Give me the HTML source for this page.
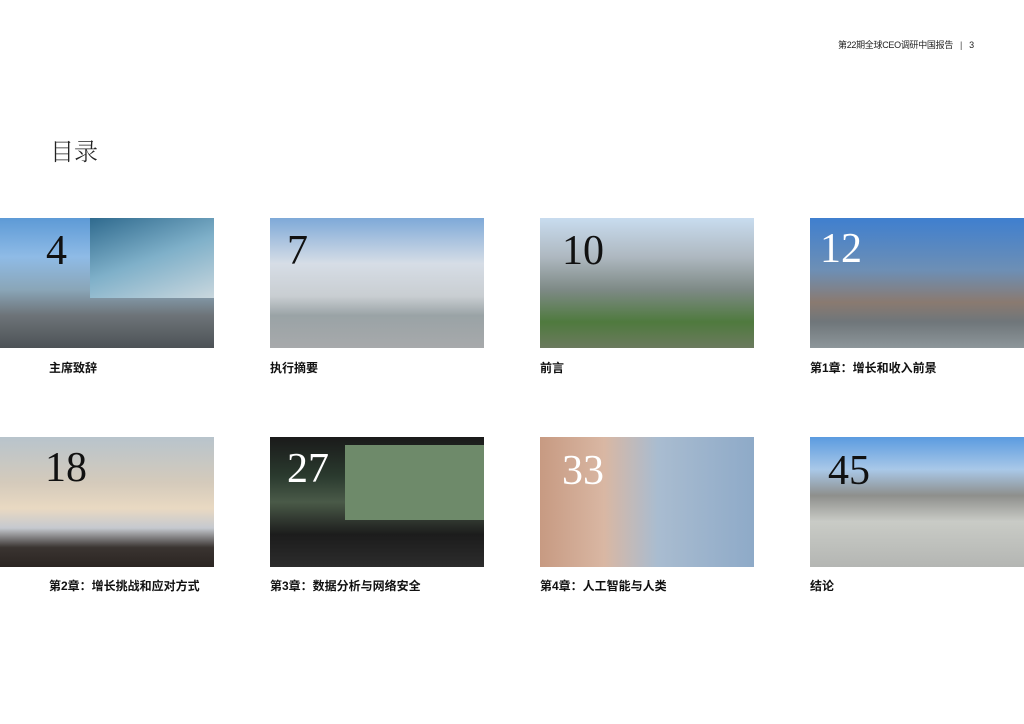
<!DOCTYPE html>
<html><head><meta charset="utf-8"><style>
body{margin:0;width:1024px;height:724px;background:#fff;position:relative;overflow:hidden;font-family:"Liberation Sans","Noto Sans CJK SC",sans-serif}
.hdr{position:absolute;top:38px;left:838px;font-size:9px;color:#222;white-space:nowrap;letter-spacing:-0.3px}
.hdr span{margin:0 7px;color:#444}
.title{position:absolute;left:50px;top:132px;font-size:24px;color:#222;font-family:"Noto Serif CJK SC","Noto Sans CJK SC",serif;font-weight:300}
.t{position:absolute;width:214px;height:130px;overflow:hidden}
.n{position:absolute;font-family:"Liberation Serif",serif;font-size:42px;line-height:1}
.l{position:absolute;font-size:12px;font-weight:bold;color:#111}
</style></head><body>
<div class="hdr">第22期全球CEO调研中国报告<span>|</span>3</div>
<div class="title">目录</div>

<div class="t" style="left:0;top:218px;background:linear-gradient(180deg,#5d9ad6 0%,#8fbbe6 30%,#8aa6b8 55%,#6d7378 75%,#4d5256 100%)">
<div style="position:absolute;left:90px;top:0;width:124px;height:80px;background:linear-gradient(160deg,#2f6a8e,#7fb0c9 50%,#c9d7de)"></div></div>
<div class="n" style="left:46px;top:230px;color:#111">4</div>
<div class="l" style="left:49px;top:359px">主席致辞</div>

<div class="t" style="left:270px;top:218px;background:linear-gradient(180deg,#7ea9d8 0%,#d6dde6 35%,#c9ced2 60%,#9aa3a6 75%,#a7a9ab 100%)"></div>
<div class="n" style="left:287px;top:230px;color:#111">7</div>
<div class="l" style="left:270px;top:359px">执行摘要</div>

<div class="t" style="left:540px;top:218px;background:linear-gradient(180deg,#c8dcef 0%,#aeb8c0 30%,#7e8a86 55%,#4f7a3e 80%,#6b7a5e 100%)"></div>
<div class="n" style="left:562px;top:230px;color:#111">10</div>
<div class="l" style="left:540px;top:359px">前言</div>

<div class="t" style="left:810px;top:218px;background:linear-gradient(180deg,#3f7fcf 0%,#6d8fb5 40%,#8a7a70 65%,#6f767a 80%,#8d969a 100%)"></div>
<div class="n" style="left:820px;top:228px;color:#fff">12</div>
<div class="l" style="left:810px;top:359px">第1章：增长和收入前景</div>

<div class="t" style="left:0;top:437px;background:linear-gradient(180deg,#b8c4cc 0%,#d4cabb 35%,#e9d9c2 55%,#c5c9cf 70%,#3a3431 85%,#2b2522 100%)"></div>
<div class="n" style="left:45px;top:447px;color:#111">18</div>
<div class="l" style="left:49px;top:577px">第2章：增长挑战和应对方式</div>

<div class="t" style="left:270px;top:437px;background:linear-gradient(180deg,#1a1a1a 0%,#2a3a2e 30%,#4a5a48 50%,#1c1c1c 75%,#2c2c2c 100%)">
<div style="position:absolute;left:75px;top:8px;width:139px;height:75px;background:#6e8a6a"></div></div>
<div class="n" style="left:287px;top:448px;color:#fff">27</div>
<div class="l" style="left:270px;top:577px">第3章：数据分析与网络安全</div>

<div class="t" style="left:540px;top:437px;background:linear-gradient(90deg,#c79a82 0%,#d9b7a3 30%,#a9bcd0 55%,#8eaac8 100%)"></div>
<div class="n" style="left:562px;top:450px;color:#fff">33</div>
<div class="l" style="left:540px;top:577px">第4章：人工智能与人类</div>

<div class="t" style="left:810px;top:437px;background:linear-gradient(180deg,#5b9be0 0%,#a9c8e8 25%,#8e8f8c 45%,#c9cbc6 65%,#b4b6b3 100%)"></div>
<div class="n" style="left:828px;top:450px;color:#111">45</div>
<div class="l" style="left:810px;top:577px">结论</div>
</body></html>
